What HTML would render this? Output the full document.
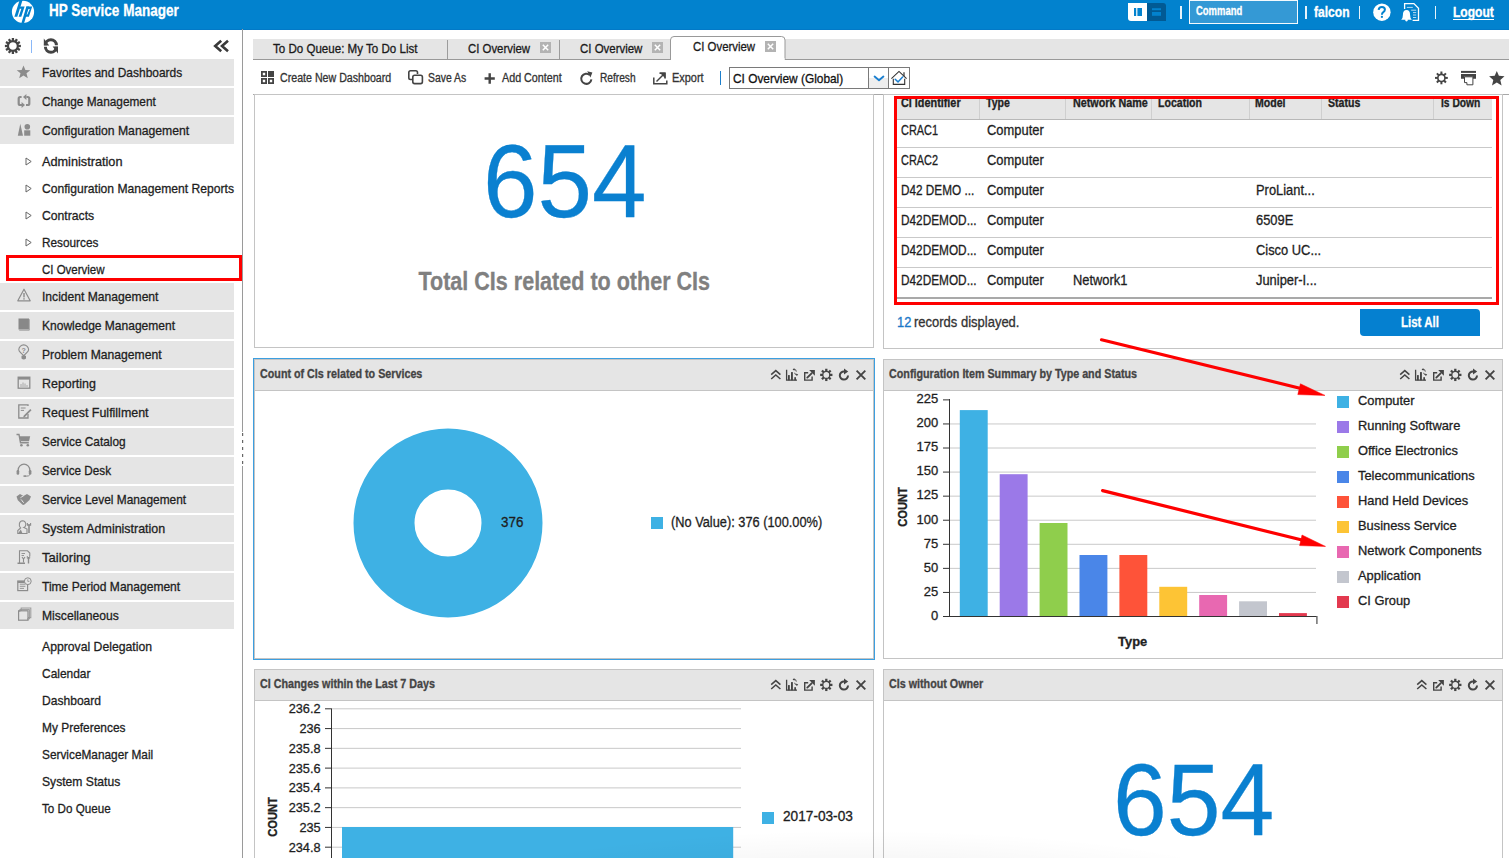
<!DOCTYPE html>
<html><head><meta charset="utf-8"><style>
html,body{margin:0;padding:0;}
body{width:1509px;height:858px;position:relative;overflow:hidden;background:#fff;font-family:"Liberation Sans",sans-serif;}
.t{position:absolute;white-space:nowrap;line-height:1;-webkit-text-stroke:0.3px currentColor;}
svg{position:absolute;overflow:visible;}
</style></head><body>
<div style="position:absolute;left:0px;top:0px;width:1509px;height:30px;background:#0282ce"></div>
<div style="position:absolute;left:0px;top:29px;width:1509px;height:1px;background:#0279c7"></div>
<svg style="left:0;top:0" width="60" height="29">
<circle cx="23" cy="11.9" r="11.1" fill="#fff"/>
<g fill="#0282ce">
<path d="M19.6 0 L22.6 0 L17.3 16.8 L14.4 16.8 Z"/>
<path d="M20.2 6.5 L24.6 6.5 L21.3 16.8 L18.6 16.8 L21.4 8.8 L19.5 8.8 Z"/>
<path d="M26.4 6.5 L29.1 6.5 L24 23.5 L21.3 23.5 Z"/>
<path fill-rule="evenodd" d="M26.4 6.5 L32.2 6.5 L28.9 16.8 L24.2 16.8 L24.9 14.6 Z M28.3 8.9 L29.8 8.9 L27.3 14.6 L25.8 14.6 Z"/>
</g></svg>
<div class="t" style="left:49.30px;top:1.90px;font-size:17px;font-weight:bold;color:#fff;transform:scaleX(0.7950);transform-origin:0 0;">HP Service Manager</div>
<svg style="left:1128px;top:3px" width="40" height="19">
<path d="M19 0 H35 Q38 0 38 3 V18 H19 Z" fill="#015a94"/>
<path d="M0 0 H19 V18 H3 Q0 18 0 15 Z" fill="#fff"/>
<rect x="6" y="5" width="2.2" height="8" fill="#0282ce"/><rect x="9.4" y="5" width="4.6" height="8" fill="#0282ce"/>
<rect x="24" y="5.2" width="9" height="2" fill="#0282ce"/><rect x="24" y="9" width="9" height="3.8" fill="#0282ce"/>
</svg>
<div style="position:absolute;left:1180.3px;top:6px;width:1.6px;height:13px;background:#fff;opacity:0.9"></div>
<div style="position:absolute;left:1305px;top:6px;width:1.6px;height:13px;background:#fff;opacity:0.9"></div>
<div style="position:absolute;left:1358.6px;top:6px;width:1.6px;height:13px;background:#fff;opacity:0.9"></div>
<div style="position:absolute;left:1434.6px;top:6px;width:1.6px;height:13px;background:#fff;opacity:0.9"></div>
<div style="position:absolute;left:1189px;top:0px;width:109px;height:24px;background:#3499d5;border:1px solid #f4f9fd;box-sizing:border-box"></div>
<div class="t" style="left:1196.20px;top:5.10px;font-size:12px;font-weight:bold;color:#fff;transform:scaleX(0.7874);transform-origin:0 0;">Command</div>
<div class="t" style="left:1314.00px;top:4.80px;font-size:14px;font-weight:bold;color:#fff;transform:scaleX(0.8616);transform-origin:0 0;">falcon</div>
<svg style="left:1365px;top:0px" width="60" height="26">
<circle cx="16.9" cy="12.2" r="8.7" fill="#fff"/>
<path d="M13.6 9.8 Q13.9 6.9 16.9 6.9 Q19.9 6.9 19.9 9.5 Q19.9 11.1 18.3 12.1 Q16.9 13 16.9 14.8" fill="none" stroke="#0282ce" stroke-width="2"/>
<rect x="15.9" y="15.9" width="2" height="1.9" fill="#0282ce"/>
<g transform="translate(35,0)">
<path d="M4.6 9 V3.6 H13.9 L18.5 8.2 V20.4 H12.6" fill="none" stroke="#fff" stroke-width="1.3"/>
<path d="M6.8 7.4 H12.8 M11.2 10.2 H16.2 M13 12.6 H16.2 M13 15 H16.2 M13 17.5 H16.2" stroke="#fff" stroke-opacity="0.8" stroke-width="0.9"/>
<path d="M1.2 19.7 Q2.9 18.7 2.9 15 Q2.9 9.9 6.5 9.9 Q10.1 9.9 10.1 15 Q10.1 18.7 11.8 19.7 Z" fill="#fff"/>
<circle cx="6.5" cy="20.1" r="1.3" fill="#fff"/>
</g>
</svg>
<div class="t" style="left:1453.00px;top:4.80px;font-size:14px;font-weight:bold;color:#fff;transform:scaleX(0.8609);transform-origin:0 0;">Logout</div>
<div style="position:absolute;left:1453px;top:18.6px;width:41px;height:1.2px;background:#fff"></div>
<svg style="left:0px;top:33px" width="26" height="26">
<g transform="translate(12.9,13)" fill="#444">
<circle r="4.95" fill="none" stroke="#444" stroke-width="2.2"/>
<rect x="-1.15" y="-8" width="2.3" height="2.8" transform="rotate(0)"/><rect x="-1.15" y="-8" width="2.3" height="2.8" transform="rotate(30)"/><rect x="-1.15" y="-8" width="2.3" height="2.8" transform="rotate(60)"/><rect x="-1.15" y="-8" width="2.3" height="2.8" transform="rotate(90)"/><rect x="-1.15" y="-8" width="2.3" height="2.8" transform="rotate(120)"/><rect x="-1.15" y="-8" width="2.3" height="2.8" transform="rotate(150)"/><rect x="-1.15" y="-8" width="2.3" height="2.8" transform="rotate(180)"/><rect x="-1.15" y="-8" width="2.3" height="2.8" transform="rotate(210)"/><rect x="-1.15" y="-8" width="2.3" height="2.8" transform="rotate(240)"/><rect x="-1.15" y="-8" width="2.3" height="2.8" transform="rotate(270)"/><rect x="-1.15" y="-8" width="2.3" height="2.8" transform="rotate(300)"/><rect x="-1.15" y="-8" width="2.3" height="2.8" transform="rotate(330)"/>
</g></svg>
<div style="position:absolute;left:31px;top:40px;width:1.2px;height:13px;background:#8ab8f8"></div>
<svg style="left:38px;top:33px" width="26" height="26">
<g fill="none" stroke="#444" stroke-width="3">
<path d="M7.4 12.2 A5.5 5.5 0 0 1 18.4 12.2"/>
<path d="M7.4 13.8 A5.5 5.5 0 0 0 18.4 13.8"/>
</g>
<path d="M5.8 5.6 L5.8 12.5 L11.2 12.5 Z" fill="#444"/>
<path d="M20 20.4 L20 13.5 L14.6 13.5 Z" fill="#444"/>
</svg>
<svg style="left:212px;top:38px" width="20" height="16">
<g fill="none" stroke="#3a3a3a" stroke-width="2.6" stroke-linejoin="miter">
<path d="M9.2 2.8 L3.2 8 L9.2 13.2"/><path d="M16 2.8 L10 8 L16 13.2"/>
</g></svg>
<div style="position:absolute;left:242px;top:29px;width:1px;height:403px;background:#9a9a9a"></div>
<svg style="left:242px;top:432px" width="2" height="36"><rect x="0" y="1" width="1.2" height="3" fill="#666"/><rect x="0" y="8" width="1.2" height="3" fill="#666"/><rect x="0" y="15" width="1.2" height="3" fill="#666"/><rect x="0" y="22" width="1.2" height="3" fill="#666"/><rect x="0" y="29" width="1.2" height="3" fill="#666"/></svg>
<div style="position:absolute;left:242px;top:466px;width:1px;height:392px;background:#9a9a9a"></div>
<div style="position:absolute;left:0px;top:59px;width:234px;height:26.6px;background:#e5e5e5"></div>
<div class="t" style="left:42.30px;top:66.00px;font-size:13px;color:#1e1e1e;transform:scaleX(0.9193);transform-origin:0 0;">Favorites and Dashboards</div>
<div style="position:absolute;left:0px;top:88px;width:234px;height:26.6px;background:#e5e5e5"></div>
<div class="t" style="left:42.30px;top:95.00px;font-size:13px;color:#1e1e1e;transform:scaleX(0.9098);transform-origin:0 0;">Change Management</div>
<div style="position:absolute;left:0px;top:117px;width:234px;height:26.6px;background:#e5e5e5"></div>
<div class="t" style="left:42.30px;top:124.00px;font-size:13px;color:#1e1e1e;transform:scaleX(0.9383);transform-origin:0 0;">Configuration Management</div>
<svg style="left:25px;top:157px" width="8" height="10"><path d="M1 1 L6.2 4.5 L1 8 Z" fill="none" stroke="#666" stroke-width="1"/></svg>
<div class="t" style="left:42.30px;top:155.00px;font-size:13px;color:#1e1e1e;transform:scaleX(0.9771);transform-origin:0 0;">Administration</div>
<svg style="left:25px;top:184px" width="8" height="10"><path d="M1 1 L6.2 4.5 L1 8 Z" fill="none" stroke="#666" stroke-width="1"/></svg>
<div class="t" style="left:42.30px;top:182.00px;font-size:13px;color:#1e1e1e;transform:scaleX(0.9320);transform-origin:0 0;">Configuration Management Reports</div>
<svg style="left:25px;top:211px" width="8" height="10"><path d="M1 1 L6.2 4.5 L1 8 Z" fill="none" stroke="#666" stroke-width="1"/></svg>
<div class="t" style="left:42.30px;top:209.00px;font-size:13px;color:#1e1e1e;transform:scaleX(0.9382);transform-origin:0 0;">Contracts</div>
<svg style="left:25px;top:238px" width="8" height="10"><path d="M1 1 L6.2 4.5 L1 8 Z" fill="none" stroke="#666" stroke-width="1"/></svg>
<div class="t" style="left:42.30px;top:236.00px;font-size:13px;color:#1e1e1e;transform:scaleX(0.9074);transform-origin:0 0;">Resources</div>
<div class="t" style="left:42.30px;top:263.00px;font-size:13px;color:#1e1e1e;transform:scaleX(0.8828);transform-origin:0 0;">CI Overview</div>
<div style="position:absolute;left:6px;top:255px;width:235.5px;height:26px;border:3px solid #fe0000;box-sizing:border-box"></div>
<div style="position:absolute;left:0px;top:283px;width:234px;height:26.6px;background:#e5e5e5"></div>
<div class="t" style="left:42.30px;top:290.00px;font-size:13px;color:#1e1e1e;transform:scaleX(0.9315);transform-origin:0 0;">Incident Management</div>
<div style="position:absolute;left:0px;top:312px;width:234px;height:26.6px;background:#e5e5e5"></div>
<div class="t" style="left:42.30px;top:319.00px;font-size:13px;color:#1e1e1e;transform:scaleX(0.9251);transform-origin:0 0;">Knowledge Management</div>
<div style="position:absolute;left:0px;top:341px;width:234px;height:26.6px;background:#e5e5e5"></div>
<div class="t" style="left:42.30px;top:348.00px;font-size:13px;color:#1e1e1e;transform:scaleX(0.9348);transform-origin:0 0;">Problem Management</div>
<div style="position:absolute;left:0px;top:370px;width:234px;height:26.6px;background:#e5e5e5"></div>
<div class="t" style="left:42.30px;top:377.00px;font-size:13px;color:#1e1e1e;transform:scaleX(0.9558);transform-origin:0 0;">Reporting</div>
<div style="position:absolute;left:0px;top:399px;width:234px;height:26.6px;background:#e5e5e5"></div>
<div class="t" style="left:42.30px;top:406.00px;font-size:13px;color:#1e1e1e;transform:scaleX(0.9578);transform-origin:0 0;">Request Fulfillment</div>
<div style="position:absolute;left:0px;top:428px;width:234px;height:26.6px;background:#e5e5e5"></div>
<div class="t" style="left:42.30px;top:435.00px;font-size:13px;color:#1e1e1e;transform:scaleX(0.9107);transform-origin:0 0;">Service Catalog</div>
<div style="position:absolute;left:0px;top:457px;width:234px;height:26.6px;background:#e5e5e5"></div>
<div class="t" style="left:42.30px;top:464.00px;font-size:13px;color:#1e1e1e;transform:scaleX(0.9009);transform-origin:0 0;">Service Desk</div>
<div style="position:absolute;left:0px;top:486px;width:234px;height:26.6px;background:#e5e5e5"></div>
<div class="t" style="left:42.30px;top:493.00px;font-size:13px;color:#1e1e1e;transform:scaleX(0.9151);transform-origin:0 0;">Service Level Management</div>
<div style="position:absolute;left:0px;top:515px;width:234px;height:26.6px;background:#e5e5e5"></div>
<div class="t" style="left:42.30px;top:522.00px;font-size:13px;color:#1e1e1e;transform:scaleX(0.9578);transform-origin:0 0;">System Administration</div>
<div style="position:absolute;left:0px;top:544px;width:234px;height:26.6px;background:#e5e5e5"></div>
<div class="t" style="left:42.30px;top:551.00px;font-size:13px;color:#1e1e1e;transform:scaleX(1.0034);transform-origin:0 0;">Tailoring</div>
<div style="position:absolute;left:0px;top:573px;width:234px;height:26.6px;background:#e5e5e5"></div>
<div class="t" style="left:42.30px;top:580.00px;font-size:13px;color:#1e1e1e;transform:scaleX(0.9267);transform-origin:0 0;">Time Period Management</div>
<div style="position:absolute;left:0px;top:602px;width:234px;height:26.6px;background:#e5e5e5"></div>
<div class="t" style="left:42.30px;top:609.00px;font-size:13px;color:#1e1e1e;transform:scaleX(0.9332);transform-origin:0 0;">Miscellaneous</div>
<div class="t" style="left:42.30px;top:640.00px;font-size:13px;color:#1e1e1e;transform:scaleX(0.9400);transform-origin:0 0;">Approval Delegation</div>
<div class="t" style="left:42.30px;top:667.00px;font-size:13px;color:#1e1e1e;transform:scaleX(0.9189);transform-origin:0 0;">Calendar</div>
<div class="t" style="left:42.30px;top:694.00px;font-size:13px;color:#1e1e1e;transform:scaleX(0.9289);transform-origin:0 0;">Dashboard</div>
<div class="t" style="left:42.30px;top:721.00px;font-size:13px;color:#1e1e1e;transform:scaleX(0.9171);transform-origin:0 0;">My Preferences</div>
<div class="t" style="left:42.30px;top:748.00px;font-size:13px;color:#1e1e1e;transform:scaleX(0.9104);transform-origin:0 0;">ServiceManager Mail</div>
<div class="t" style="left:42.30px;top:775.00px;font-size:13px;color:#1e1e1e;transform:scaleX(0.9330);transform-origin:0 0;">System Status</div>
<div class="t" style="left:42.30px;top:802.00px;font-size:13px;color:#1e1e1e;transform:scaleX(0.8966);transform-origin:0 0;">To Do Queue</div>
<svg style="left:16px;top:65px" width="16" height="15"><path d="M7.5 0.5 L9.4 5 L14.3 5.2 L10.5 8.3 L11.8 13.3 L7.5 10.5 L3.2 13.3 L4.5 8.3 L0.7 5.2 L5.6 5 Z" fill="#8c8c8c"/></svg>
<svg style="left:0;top:0" width="40" height="140"><path d="M21.6 97 H20.2 Q18.7 97 18.7 98.5 V103.5 Q18.7 105 20.2 105 H22" fill="none" stroke="#8c8c8c" stroke-width="2.2"/><path d="M26 105 H27.8 Q29.3 105 29.3 103.5 V98.5 Q29.3 97 27.8 97 H26.4" fill="none" stroke="#8c8c8c" stroke-width="2.2"/><path d="M21.6 102 L25 105 L21.6 108 Z M26.4 94 L23 97 L26.4 100 Z" fill="#8c8c8c"/></svg>
<svg style="left:16px;top:123px" width="16" height="15"><path d="M4.3 0.8 L7 12.7 H1.8 Z" fill="#8c8c8c"/><circle cx="11.3" cy="3.7" r="2.8" fill="#8c8c8c"/><rect x="8.2" y="7.3" width="6.1" height="5.4" fill="#8c8c8c"/></svg>
<svg style="left:17px;top:288px" width="15" height="15"><path d="M7 1.2 L13.2 12.8 H0.8 Z" fill="none" stroke="#8c8c8c" stroke-width="1.2" stroke-linejoin="round"/><rect x="6.3" y="5" width="1.4" height="4.4" fill="#8c8c8c"/><rect x="6.3" y="10.2" width="1.4" height="1.4" fill="#8c8c8c"/></svg>
<svg style="left:18px;top:318px" width="13" height="14"><rect x="0.5" y="0.5" width="10.5" height="11" fill="#888"/><path d="M11.3 1.2 V12.2 H1.2" fill="none" stroke="#a0a0a0" stroke-width="1"/></svg>
<svg style="left:18px;top:345px" width="13" height="18"><path d="M5.6 12.2 Q5.6 9.8 3 8 Q0.8 6.2 0.8 4.8 A4.9 4.9 0 0 1 10.6 4.8 Q10.6 6.2 8.4 8 Q5.8 9.8 5.8 12.2" fill="none" stroke="#8c8c8c" stroke-width="1.1"/><path d="M3.5 10.8 H8 V13.6 Q5.7 15.6 3.5 13.6 Z" fill="#8c8c8c"/><text x="5.7" y="8" text-anchor="middle" font-family="Liberation Sans" font-weight="bold" font-size="7" fill="#8c8c8c">?</text></svg>
<svg style="left:17px;top:376px" width="14" height="14"><rect x="1.2" y="1.2" width="11.6" height="11" fill="none" stroke="#8c8c8c" stroke-width="1.3"/><rect x="1.2" y="1" width="11.6" height="2.6" fill="#8c8c8c"/><path d="M4 11 V8 M6 11 V6.5 M8 11 V7.5 M10 11 V9" stroke="#a8a8a8" stroke-width="1"/></svg>
<svg style="left:18px;top:404px" width="14" height="16"><path d="M10 2 V0.8 H0.8 V14 H10 V10" fill="none" stroke="#8c8c8c" stroke-width="1.3"/><path d="M2.8 4 H7.6 M2.8 6.4 H6" stroke="#8c8c8c" stroke-width="1"/><path d="M5.6 11.8 L12.3 5 L13.5 6.2 L6.8 13 L5.2 13.4 Z" fill="#8c8c8c"/></svg>
<svg style="left:16px;top:433px" width="16" height="16"><path d="M0.5 1.5 H3 L4.5 9.8 H12.8" fill="none" stroke="#8c8c8c" stroke-width="1.4"/><path d="M3.6 3.2 H14.2 L13 8.3 H4.4 Z" fill="#8c8c8c"/><circle cx="5.4" cy="12.2" r="1.3" fill="#8c8c8c"/><circle cx="11.8" cy="12.2" r="1.3" fill="#8c8c8c"/></svg>
<svg style="left:16px;top:463px" width="16" height="15"><path d="M2.2 9 V7 A5.8 5.8 0 0 1 13.8 7 V9" fill="none" stroke="#8c8c8c" stroke-width="1.3"/><rect x="0.6" y="7" width="2.6" height="4.8" rx="1.2" fill="#8c8c8c"/><rect x="12.8" y="7" width="2.6" height="4.8" rx="1.2" fill="#8c8c8c"/><path d="M14 11.5 Q13 13.5 9.5 13.2" fill="none" stroke="#8c8c8c" stroke-width="1"/><rect x="7.5" y="12.3" width="2.5" height="1.6" fill="#8c8c8c"/></svg>
<svg style="left:16px;top:493px" width="16" height="13"><path d="M0.5 3.5 L4 1 L7.5 3 L11 1 L15 3.5 L13.5 7 L8.5 11.5 Q7 12.5 6 11.3 L1.8 7.3 Z" fill="#8c8c8c"/><path d="M4.5 4.5 L7.5 3 M6 8 L8 9.8 M4.6 6.3 L7 8.5" stroke="#e5e5e5" stroke-width="0.9"/></svg>
<svg style="left:17px;top:520px" width="15" height="15"><path d="M5.5 0.8 A3.4 3.4 0 0 1 8.8 4.5 Q8.6 7 6.8 7.5 L10 9 V13.5 H0.8 V10.5 L3.6 8 Q1.8 6.5 2.4 3.6 A3.4 3.4 0 0 1 5.5 0.8Z" fill="none" stroke="#8c8c8c" stroke-width="1.1"/><path d="M1 13.5 L3.8 9.5 L5.5 13.5 Z" fill="#8c8c8c"/><path d="M12 4 V13" stroke="#8c8c8c" stroke-width="1.6"/><path d="M10.4 3 V5.2 H13.6 V3" fill="none" stroke="#8c8c8c" stroke-width="1.1"/></svg>
<svg style="left:17px;top:550px" width="15" height="15"><path d="M2.5 13.3 V0.8 H10.5 L12.8 3 V6" fill="none" stroke="#8c8c8c" stroke-width="1.1"/><path d="M4.5 3.5 H8 M4.5 5.5 H7" stroke="#8c8c8c" stroke-width="0.9"/><path d="M0.5 12.5 H8 V14 H0.5Z" fill="#8c8c8c"/><path d="M5 7 L6.5 9 L8 7 M6.5 9 V12.5" fill="none" stroke="#8c8c8c" stroke-width="1.1"/><path d="M11.5 7 V13.5" stroke="#8c8c8c" stroke-width="1.4"/><path d="M10.3 6 V8.3 H12.7 V6" fill="none" stroke="#8c8c8c" stroke-width="0.9"/></svg>
<svg style="left:17px;top:577px" width="15" height="15"><rect x="0.8" y="4" width="9.8" height="9.6" fill="none" stroke="#8c8c8c" stroke-width="1.2"/><path d="M2.8 7.2 H8.4 M2.8 9.3 H8.4 M2.8 11.4 H7" stroke="#8c8c8c" stroke-width="0.9"/><rect x="0.8" y="4" width="9.8" height="2" fill="#8c8c8c"/><circle cx="10.8" cy="4.2" r="3.4" fill="#e5e5e5" stroke="#8c8c8c" stroke-width="1"/><path d="M10.8 2.3 V4.4 H12.4" fill="none" stroke="#8c8c8c" stroke-width="0.8"/></svg>
<svg style="left:18px;top:607px" width="14" height="15"><path d="M3.2 3.8 V1 H12.8 V10.6 H10" fill="none" stroke="#a0a0a0" stroke-width="1.1"/><path d="M1.8 5 V2.4 H11.4 V12 H9" fill="none" stroke="#999" stroke-width="1"/><rect x="0.6" y="3.8" width="9.4" height="9.4" fill="none" stroke="#8c8c8c" stroke-width="1.2"/></svg>
<div style="position:absolute;left:253px;top:39px;width:1256px;height:20px;background:#e5e5e5;border-bottom:1px solid #999;box-sizing:content-box"></div>
<div style="position:absolute;left:447px;top:40px;width:1px;height:19px;background:#9c9c9c"></div>
<div style="position:absolute;left:559px;top:40px;width:1px;height:19px;background:#9c9c9c"></div>
<div class="t" style="left:273.20px;top:41.90px;font-size:13px;color:#1a1a1a;transform:scaleX(0.8900);transform-origin:0 0;">To Do Queue: My To Do List</div>
<div class="t" style="left:468.00px;top:41.90px;font-size:13px;color:#1a1a1a;transform:scaleX(0.8757);transform-origin:0 0;">CI Overview</div>
<svg style="left:540px;top:42px" width="12" height="12"><rect x="0" y="0" width="11" height="11" fill="#b3b3b3"/><path d="M2.8 2.8 L8.2 8.2 M8.2 2.8 L2.8 8.2" stroke="#fff" stroke-width="1.5"/></svg>
<div class="t" style="left:580.00px;top:41.90px;font-size:13px;color:#1a1a1a;transform:scaleX(0.8814);transform-origin:0 0;">CI Overview</div>
<svg style="left:652px;top:42px" width="12" height="12"><rect x="0" y="0" width="11" height="11" fill="#b3b3b3"/><path d="M2.8 2.8 L8.2 8.2 M8.2 2.8 L2.8 8.2" stroke="#fff" stroke-width="1.5"/></svg>
<svg style="left:670px;top:36px" width="117" height="25"><path d="M0.5 24 V4 Q0.5 0.5 4 0.5 H111.5 Q115 0.5 115 4 V24" fill="#fff" stroke="#999" stroke-width="1"/><rect x="1" y="22" width="113.5" height="3" fill="#fff"/></svg>
<div class="t" style="left:692.50px;top:40.00px;font-size:13px;color:#1a1a1a;transform:scaleX(0.8772);transform-origin:0 0;">CI Overview</div>
<svg style="left:765px;top:41px" width="12" height="12"><rect x="0" y="0" width="11" height="11" fill="#b3b3b3"/><path d="M2.8 2.8 L8.2 8.2 M8.2 2.8 L2.8 8.2" stroke="#fff" stroke-width="1.5"/></svg>
<svg style="left:261px;top:71px" width="14" height="14" fill="#444">
<path fill-rule="evenodd" d="M0 0H6V6H0Z M1.8 1.8V4.2H4.2V1.8Z"/>
<rect x="7" y="0" width="6" height="6"/>
<path fill-rule="evenodd" d="M0 7H6V13H0Z M1.8 8.8V11.2H4.2V8.8Z"/>
<path fill-rule="evenodd" d="M7 7H13V13H7Z M8.8 8.8V11.2H11.2V8.8Z"/>
</svg>
<div class="t" style="left:279.80px;top:71.90px;font-size:12px;color:#333;transform:scaleX(0.8868);transform-origin:0 0;">Create New Dashboard</div>
<svg style="left:408px;top:70px" width="16" height="16" fill="none" stroke="#444" stroke-width="1.6">
<path d="M4 9.5 H2.5 Q0.8 9.5 0.8 7.8 V2.6 Q0.8 0.8 2.6 0.8 H7.8 Q9.5 0.8 9.5 2.6 V4"/>
<rect x="4.8" y="5.2" width="9.6" height="8.4" rx="1.8"/>
</svg>
<div class="t" style="left:427.80px;top:71.90px;font-size:12px;color:#333;transform:scaleX(0.8656);transform-origin:0 0;">Save As</div>
<svg style="left:484px;top:73px" width="13" height="12"><path d="M5.7 0.3V10.7 M0.6 5.5H10.8" stroke="#444" stroke-width="2.4"/></svg>
<div class="t" style="left:502.30px;top:71.90px;font-size:12px;color:#333;transform:scaleX(0.8952);transform-origin:0 0;">Add Content</div>
<svg style="left:580px;top:71px" width="14" height="15">
<path d="M9.8 4 A5.1 5.1 0 1 0 11.4 8.4" fill="none" stroke="#444" stroke-width="2"/>
<path d="M7.2 0.2 L12.4 1.6 L10.4 6.4 Z" fill="#444"/>
</svg>
<div class="t" style="left:599.60px;top:71.90px;font-size:12px;color:#333;transform:scaleX(0.8473);transform-origin:0 0;">Refresh</div>
<svg style="left:653px;top:72px" width="15" height="13" fill="none" stroke="#444" stroke-width="1.5">
<path d="M0.8 5.5 V11.8 H13.8 V8.5"/>
<path d="M3.5 9.5 L11 2"/>
<path d="M6.5 1.2 H12 V6.5" />
</svg>
<svg style="left:653px;top:72px" width="15" height="13"><path d="M6.5 0.5 H12.5 V6.5 Z" fill="#444"/></svg>
<div class="t" style="left:672.00px;top:71.90px;font-size:12px;color:#333;transform:scaleX(0.9114);transform-origin:0 0;">Export</div>
<div style="position:absolute;left:719.5px;top:71px;width:1.3px;height:14px;background:#1d7fcc"></div>
<div style="position:absolute;left:729px;top:67px;width:181px;height:22px;border:1px solid #7a7a7a;box-sizing:border-box;background:#fff"></div>
<div style="position:absolute;left:868px;top:67px;width:21px;height:22px;background:linear-gradient(#fff 0,#fff 50%,#eeeeee 50%,#eeeeee 100%);border:1px solid #7a7a7a;box-sizing:border-box"></div>
<div class="t" style="left:732.80px;top:72.00px;font-size:13px;color:#111;transform:scaleX(0.9133);transform-origin:0 0;">CI Overview (Global)</div>
<svg style="left:860px;top:64px" width="55" height="28"><path d="M14.6 12.6 L19 16.2 L23.4 12.6" fill="none" stroke="#1a7fd0" stroke-width="1.9" stroke-linecap="round" stroke-linejoin="round"/><path d="M33.3 14.8 V20.4 H44.7 V14.8" fill="none" stroke="#333" stroke-width="1.1"/><path d="M31.4 14.6 L39 7.4 L46.6 14.6" fill="none" stroke="#333" stroke-width="1.1"/><path d="M44 8.2 V12.6" stroke="#333" stroke-width="1.2"/><path d="M35.2 15.3 L38 17.9 L42.6 13" fill="none" stroke="#1a7fd0" stroke-width="1.5" stroke-linecap="round"/></svg>
<svg style="left:1434px;top:71px" width="15" height="15">
<g transform="translate(7.4,6.9)" fill="#444">
<circle r="3.55" fill="none" stroke="#444" stroke-width="1.6"/>
<rect x="-1" y="-6.4" width="2" height="3" transform="rotate(0)"/><rect x="-1" y="-6.4" width="2" height="3" transform="rotate(45)"/><rect x="-1" y="-6.4" width="2" height="3" transform="rotate(90)"/><rect x="-1" y="-6.4" width="2" height="3" transform="rotate(135)"/><rect x="-1" y="-6.4" width="2" height="3" transform="rotate(180)"/><rect x="-1" y="-6.4" width="2" height="3" transform="rotate(225)"/><rect x="-1" y="-6.4" width="2" height="3" transform="rotate(270)"/><rect x="-1" y="-6.4" width="2" height="3" transform="rotate(315)"/>
</g></svg>
<svg style="left:1460px;top:70px" width="18" height="17">
<rect x="1" y="0.9" width="15" height="2" fill="#444"/>
<path d="M1 4 H16 V8.7 H13 V6.8 H4 V8.7 H1 Z" fill="#444"/>
<path d="M4.5 6.8 H12.9 V14.8 H6.9 V12.6 H4.5 Z" fill="#fff" stroke="#444" stroke-width="1"/>
</svg>
<svg style="left:1488px;top:69.5px" width="18" height="18"><path d="M8.8 0.9 L10.9 5.8 L16.5 6.3 L12.3 10 L13.6 15.4 L8.8 12.5 L4 15.4 L5.3 10 L1.1 6.3 L6.7 5.8 Z" fill="#444"/></svg>
<div style="position:absolute;left:253px;top:94px;width:1256px;height:1px;background:#a8a8a8"></div>
<div style="position:absolute;left:254px;top:94px;width:620px;height:254px;border:1px solid #c4c4c4;box-sizing:border-box;background:#fff"></div>
<div class="t" style="left:477.93px;top:129.40px;font-size:104px;color:#0a80d0;transform:scaleX(0.9422);transform-origin:50% 0;">654</div>
<div class="t" style="left:394.73px;top:268.50px;font-size:25px;font-weight:bold;color:#808080;transform:scaleX(0.8614);transform-origin:50% 0;">Total CIs related to other CIs</div>
<div style="position:absolute;left:883px;top:94px;width:620px;height:255px;border:1px solid #c4c4c4;box-sizing:border-box;background:#fff"></div>
<div style="position:absolute;left:897px;top:99px;width:595px;height:20px;background:#e5e5e5;border-bottom:1px solid #b8b8b8;box-sizing:content-box"></div>
<div style="position:absolute;left:979px;top:99px;width:1px;height:20px;background:#cfcfcf"></div>
<div style="position:absolute;left:1065px;top:99px;width:1px;height:20px;background:#cfcfcf"></div>
<div style="position:absolute;left:1151px;top:99px;width:1px;height:20px;background:#cfcfcf"></div>
<div style="position:absolute;left:1249px;top:99px;width:1px;height:20px;background:#cfcfcf"></div>
<div style="position:absolute;left:1321px;top:99px;width:1px;height:20px;background:#cfcfcf"></div>
<div style="position:absolute;left:1433px;top:99px;width:1px;height:20px;background:#cfcfcf"></div>
<div class="t" style="left:900.60px;top:97.20px;font-size:12px;font-weight:bold;color:#222;transform:scaleX(0.9032);transform-origin:0 0;">CI Identifier</div>
<div class="t" style="left:986.40px;top:97.20px;font-size:12px;font-weight:bold;color:#222;transform:scaleX(0.8800);transform-origin:0 0;">Type</div>
<div class="t" style="left:1072.50px;top:97.20px;font-size:12px;font-weight:bold;color:#222;transform:scaleX(0.8961);transform-origin:0 0;">Network Name</div>
<div class="t" style="left:1158.40px;top:97.20px;font-size:12px;font-weight:bold;color:#222;transform:scaleX(0.8800);transform-origin:0 0;">Location</div>
<div class="t" style="left:1255.20px;top:97.20px;font-size:12px;font-weight:bold;color:#222;transform:scaleX(0.8800);transform-origin:0 0;">Model</div>
<div class="t" style="left:1328.20px;top:97.20px;font-size:12px;font-weight:bold;color:#222;transform:scaleX(0.8800);transform-origin:0 0;">Status</div>
<div class="t" style="left:1440.50px;top:97.20px;font-size:12px;font-weight:bold;color:#222;transform:scaleX(0.8546);transform-origin:0 0;">Is Down</div>
<div style="position:absolute;left:897px;top:147px;width:595px;height:1px;background:#c9c9c9"></div>
<div style="position:absolute;left:897px;top:177px;width:595px;height:1px;background:#c9c9c9"></div>
<div style="position:absolute;left:897px;top:207px;width:595px;height:1px;background:#c9c9c9"></div>
<div style="position:absolute;left:897px;top:237px;width:595px;height:1px;background:#c9c9c9"></div>
<div style="position:absolute;left:897px;top:267px;width:595px;height:1px;background:#c9c9c9"></div>
<div style="position:absolute;left:897px;top:297px;width:595px;height:1.5px;background:#a9a9a9"></div>
<div class="t" style="left:901.20px;top:123.20px;font-size:14px;color:#1e1e1e;transform:scaleX(0.7797);transform-origin:0 0;">CRAC1</div>
<div class="t" style="left:987.00px;top:123.20px;font-size:14px;color:#1e1e1e;transform:scaleX(0.9229);transform-origin:0 0;">Computer</div>
<div class="t" style="left:901.20px;top:153.20px;font-size:14px;color:#1e1e1e;transform:scaleX(0.7797);transform-origin:0 0;">CRAC2</div>
<div class="t" style="left:987.00px;top:153.20px;font-size:14px;color:#1e1e1e;transform:scaleX(0.9229);transform-origin:0 0;">Computer</div>
<div class="t" style="left:901.20px;top:183.20px;font-size:14px;color:#1e1e1e;transform:scaleX(0.8402);transform-origin:0 0;">D42 DEMO ...</div>
<div class="t" style="left:987.00px;top:183.20px;font-size:14px;color:#1e1e1e;transform:scaleX(0.9229);transform-origin:0 0;">Computer</div>
<div class="t" style="left:1256.30px;top:183.20px;font-size:14px;color:#1e1e1e;transform:scaleX(0.9200);transform-origin:0 0;">ProLiant...</div>
<div class="t" style="left:901.20px;top:213.20px;font-size:14px;color:#1e1e1e;transform:scaleX(0.8440);transform-origin:0 0;">D42DEMOD...</div>
<div class="t" style="left:987.00px;top:213.20px;font-size:14px;color:#1e1e1e;transform:scaleX(0.9229);transform-origin:0 0;">Computer</div>
<div class="t" style="left:1256.30px;top:213.20px;font-size:14px;color:#1e1e1e;transform:scaleX(0.9200);transform-origin:0 0;">6509E</div>
<div class="t" style="left:901.20px;top:243.20px;font-size:14px;color:#1e1e1e;transform:scaleX(0.8440);transform-origin:0 0;">D42DEMOD...</div>
<div class="t" style="left:987.00px;top:243.20px;font-size:14px;color:#1e1e1e;transform:scaleX(0.9229);transform-origin:0 0;">Computer</div>
<div class="t" style="left:1256.30px;top:243.20px;font-size:14px;color:#1e1e1e;transform:scaleX(0.9200);transform-origin:0 0;">Cisco UC...</div>
<div class="t" style="left:901.20px;top:273.20px;font-size:14px;color:#1e1e1e;transform:scaleX(0.8440);transform-origin:0 0;">D42DEMOD...</div>
<div class="t" style="left:987.00px;top:273.20px;font-size:14px;color:#1e1e1e;transform:scaleX(0.9229);transform-origin:0 0;">Computer</div>
<div class="t" style="left:1073.00px;top:273.20px;font-size:14px;color:#1e1e1e;transform:scaleX(0.9200);transform-origin:0 0;">Network1</div>
<div class="t" style="left:1256.30px;top:273.20px;font-size:14px;color:#1e1e1e;transform:scaleX(0.9200);transform-origin:0 0;">Juniper-I...</div>
<div style="position:absolute;left:894px;top:96px;width:605px;height:209px;border:3px solid #fe0000;box-sizing:border-box"></div>
<div class="t" style="left:896.70px;top:315.00px;font-size:14px;color:#1a78c8;transform:scaleX(0.9200);transform-origin:0 0;">12</div>
<div class="t" style="left:913.50px;top:315.00px;font-size:14px;color:#333;transform:scaleX(0.9281);transform-origin:0 0;">records displayed.</div>
<div style="position:absolute;left:1360px;top:309px;width:120px;height:27px;background:#0580d0;border-radius:0 4px 0 4px"></div>
<div class="t" style="left:1401.30px;top:315.00px;font-size:14px;font-weight:bold;color:#fff;transform:scaleX(0.8214);transform-origin:0 0;">List All</div>
<div style="position:absolute;left:253px;top:358px;width:622px;height:302px;border:1px solid #3c9fe0;box-sizing:border-box"></div>
<div style="position:absolute;left:254px;top:359px;width:620px;height:300px;border:1px solid #c4c4c4;box-sizing:border-box;background:#fff"></div>
<div style="position:absolute;left:255px;top:360px;width:618px;height:30px;background:#e5e5e5;border-bottom:1px solid #c4c4c4;box-sizing:content-box"></div>
<div class="t" style="left:260.00px;top:367.60px;font-size:12px;font-weight:bold;color:#444;transform:scaleX(0.8950);transform-origin:0 0;">Count of CIs related to Services</div>
<div style="position:absolute;left:883px;top:359px;width:620px;height:300px;border:1px solid #c4c4c4;box-sizing:border-box;background:#fff"></div>
<div style="position:absolute;left:884px;top:360px;width:618px;height:30px;background:#e5e5e5;border-bottom:1px solid #c4c4c4;box-sizing:content-box"></div>
<div class="t" style="left:889.00px;top:367.60px;font-size:12px;font-weight:bold;color:#444;transform:scaleX(0.8950);transform-origin:0 0;">Configuration Item Summary by Type and Status</div>
<div style="position:absolute;left:254px;top:669px;width:620px;height:200px;border:1px solid #c4c4c4;box-sizing:border-box;background:#fff"></div>
<div style="position:absolute;left:255px;top:670px;width:618px;height:30px;background:#e5e5e5;border-bottom:1px solid #c4c4c4;box-sizing:content-box"></div>
<div class="t" style="left:260.00px;top:677.60px;font-size:12px;font-weight:bold;color:#444;transform:scaleX(0.8950);transform-origin:0 0;">CI Changes within the Last 7 Days</div>
<div style="position:absolute;left:883px;top:669px;width:620px;height:200px;border:1px solid #c4c4c4;box-sizing:border-box;background:#fff"></div>
<div style="position:absolute;left:884px;top:670px;width:618px;height:30px;background:#e5e5e5;border-bottom:1px solid #c4c4c4;box-sizing:content-box"></div>
<div class="t" style="left:889.00px;top:677.60px;font-size:12px;font-weight:bold;color:#444;transform:scaleX(0.8950);transform-origin:0 0;">CIs without Owner</div>
<svg style="left:768px;top:364px" width="106" height="22"><path d="M3.2 10.6 L7.8 6.6 L12.4 10.6 M3.2 15 L7.8 11 L12.4 15" fill="none" stroke="#444" stroke-width="1.5"/><path d="M18.6 5.8 V16.2 H29" fill="none" stroke="#444" stroke-width="1.3"/><rect x="20" y="11.1" width="1.8" height="5.2" fill="#444"/><rect x="23" y="8.1" width="1.9" height="8.2" fill="#444"/><rect x="26.3" y="13.2" width="1.7" height="3.1" fill="#444"/><path d="M25.6 5.4 Q28.4 5 28.3 7.6 M26.6 8.8 Q26.8 11 29.4 10.8" fill="none" stroke="#444" stroke-width="0.9"/><path d="M24.6 5.4 L26.4 4.1 L26.4 6.7 Z M30.2 10.8 L28.4 9.5 L28.4 12.1 Z" fill="#444"/><path d="M40.2 8.8 H36.7 V16.1 H44.1 V12.6" fill="none" stroke="#444" stroke-width="1.4"/><path d="M39.3 13.6 L43.6 9.3" stroke="#444" stroke-width="1.9" stroke-linecap="round"/><path d="M41.2 6 L46.9 6 L46.9 11.7 Z" fill="#444"/><g transform="translate(58.3,10.9)"><circle r="3.5" fill="none" stroke="#444" stroke-width="1.3"/><rect x="-1.15" y="-6.15" width="2.3" height="2.8" transform="rotate(0)" fill="#444"/><rect x="-1.15" y="-6.15" width="2.3" height="2.8" transform="rotate(45)" fill="#444"/><rect x="-1.15" y="-6.15" width="2.3" height="2.8" transform="rotate(90)" fill="#444"/><rect x="-1.15" y="-6.15" width="2.3" height="2.8" transform="rotate(135)" fill="#444"/><rect x="-1.15" y="-6.15" width="2.3" height="2.8" transform="rotate(180)" fill="#444"/><rect x="-1.15" y="-6.15" width="2.3" height="2.8" transform="rotate(225)" fill="#444"/><rect x="-1.15" y="-6.15" width="2.3" height="2.8" transform="rotate(270)" fill="#444"/><rect x="-1.15" y="-6.15" width="2.3" height="2.8" transform="rotate(315)" fill="#444"/></g><path d="M80 11.5 A4.1 4.1 0 1 1 76.2 7.4" fill="none" stroke="#444" stroke-width="2"/><path d="M76 4.6 L80.2 7.5 L76 10.4 Z" fill="#444"/><path d="M88.6 6.7 L97.3 15.4 M97.3 6.7 L88.6 15.4" stroke="#444" stroke-width="1.9"/></svg>
<svg style="left:1397px;top:364px" width="106" height="22"><path d="M3.2 10.6 L7.8 6.6 L12.4 10.6 M3.2 15 L7.8 11 L12.4 15" fill="none" stroke="#444" stroke-width="1.5"/><path d="M18.6 5.8 V16.2 H29" fill="none" stroke="#444" stroke-width="1.3"/><rect x="20" y="11.1" width="1.8" height="5.2" fill="#444"/><rect x="23" y="8.1" width="1.9" height="8.2" fill="#444"/><rect x="26.3" y="13.2" width="1.7" height="3.1" fill="#444"/><path d="M25.6 5.4 Q28.4 5 28.3 7.6 M26.6 8.8 Q26.8 11 29.4 10.8" fill="none" stroke="#444" stroke-width="0.9"/><path d="M24.6 5.4 L26.4 4.1 L26.4 6.7 Z M30.2 10.8 L28.4 9.5 L28.4 12.1 Z" fill="#444"/><path d="M40.2 8.8 H36.7 V16.1 H44.1 V12.6" fill="none" stroke="#444" stroke-width="1.4"/><path d="M39.3 13.6 L43.6 9.3" stroke="#444" stroke-width="1.9" stroke-linecap="round"/><path d="M41.2 6 L46.9 6 L46.9 11.7 Z" fill="#444"/><g transform="translate(58.3,10.9)"><circle r="3.5" fill="none" stroke="#444" stroke-width="1.3"/><rect x="-1.15" y="-6.15" width="2.3" height="2.8" transform="rotate(0)" fill="#444"/><rect x="-1.15" y="-6.15" width="2.3" height="2.8" transform="rotate(45)" fill="#444"/><rect x="-1.15" y="-6.15" width="2.3" height="2.8" transform="rotate(90)" fill="#444"/><rect x="-1.15" y="-6.15" width="2.3" height="2.8" transform="rotate(135)" fill="#444"/><rect x="-1.15" y="-6.15" width="2.3" height="2.8" transform="rotate(180)" fill="#444"/><rect x="-1.15" y="-6.15" width="2.3" height="2.8" transform="rotate(225)" fill="#444"/><rect x="-1.15" y="-6.15" width="2.3" height="2.8" transform="rotate(270)" fill="#444"/><rect x="-1.15" y="-6.15" width="2.3" height="2.8" transform="rotate(315)" fill="#444"/></g><path d="M80 11.5 A4.1 4.1 0 1 1 76.2 7.4" fill="none" stroke="#444" stroke-width="2"/><path d="M76 4.6 L80.2 7.5 L76 10.4 Z" fill="#444"/><path d="M88.6 6.7 L97.3 15.4 M97.3 6.7 L88.6 15.4" stroke="#444" stroke-width="1.9"/></svg>
<svg style="left:768px;top:674px" width="106" height="22"><path d="M3.2 10.6 L7.8 6.6 L12.4 10.6 M3.2 15 L7.8 11 L12.4 15" fill="none" stroke="#444" stroke-width="1.5"/><path d="M18.6 5.8 V16.2 H29" fill="none" stroke="#444" stroke-width="1.3"/><rect x="20" y="11.1" width="1.8" height="5.2" fill="#444"/><rect x="23" y="8.1" width="1.9" height="8.2" fill="#444"/><rect x="26.3" y="13.2" width="1.7" height="3.1" fill="#444"/><path d="M25.6 5.4 Q28.4 5 28.3 7.6 M26.6 8.8 Q26.8 11 29.4 10.8" fill="none" stroke="#444" stroke-width="0.9"/><path d="M24.6 5.4 L26.4 4.1 L26.4 6.7 Z M30.2 10.8 L28.4 9.5 L28.4 12.1 Z" fill="#444"/><path d="M40.2 8.8 H36.7 V16.1 H44.1 V12.6" fill="none" stroke="#444" stroke-width="1.4"/><path d="M39.3 13.6 L43.6 9.3" stroke="#444" stroke-width="1.9" stroke-linecap="round"/><path d="M41.2 6 L46.9 6 L46.9 11.7 Z" fill="#444"/><g transform="translate(58.3,10.9)"><circle r="3.5" fill="none" stroke="#444" stroke-width="1.3"/><rect x="-1.15" y="-6.15" width="2.3" height="2.8" transform="rotate(0)" fill="#444"/><rect x="-1.15" y="-6.15" width="2.3" height="2.8" transform="rotate(45)" fill="#444"/><rect x="-1.15" y="-6.15" width="2.3" height="2.8" transform="rotate(90)" fill="#444"/><rect x="-1.15" y="-6.15" width="2.3" height="2.8" transform="rotate(135)" fill="#444"/><rect x="-1.15" y="-6.15" width="2.3" height="2.8" transform="rotate(180)" fill="#444"/><rect x="-1.15" y="-6.15" width="2.3" height="2.8" transform="rotate(225)" fill="#444"/><rect x="-1.15" y="-6.15" width="2.3" height="2.8" transform="rotate(270)" fill="#444"/><rect x="-1.15" y="-6.15" width="2.3" height="2.8" transform="rotate(315)" fill="#444"/></g><path d="M80 11.5 A4.1 4.1 0 1 1 76.2 7.4" fill="none" stroke="#444" stroke-width="2"/><path d="M76 4.6 L80.2 7.5 L76 10.4 Z" fill="#444"/><path d="M88.6 6.7 L97.3 15.4 M97.3 6.7 L88.6 15.4" stroke="#444" stroke-width="1.9"/></svg>
<svg style="left:1397px;top:674px" width="106" height="22"><path d="M20.2 10.6 L24.8 6.6 L29.4 10.6 M20.2 15 L24.8 11 L29.4 15" fill="none" stroke="#444" stroke-width="1.5"/><path d="M40.2 8.8 H36.7 V16.1 H44.1 V12.6" fill="none" stroke="#444" stroke-width="1.4"/><path d="M39.3 13.6 L43.6 9.3" stroke="#444" stroke-width="1.9" stroke-linecap="round"/><path d="M41.2 6 L46.9 6 L46.9 11.7 Z" fill="#444"/><g transform="translate(58.3,10.9)"><circle r="3.5" fill="none" stroke="#444" stroke-width="1.3"/><rect x="-1.15" y="-6.15" width="2.3" height="2.8" transform="rotate(0)" fill="#444"/><rect x="-1.15" y="-6.15" width="2.3" height="2.8" transform="rotate(45)" fill="#444"/><rect x="-1.15" y="-6.15" width="2.3" height="2.8" transform="rotate(90)" fill="#444"/><rect x="-1.15" y="-6.15" width="2.3" height="2.8" transform="rotate(135)" fill="#444"/><rect x="-1.15" y="-6.15" width="2.3" height="2.8" transform="rotate(180)" fill="#444"/><rect x="-1.15" y="-6.15" width="2.3" height="2.8" transform="rotate(225)" fill="#444"/><rect x="-1.15" y="-6.15" width="2.3" height="2.8" transform="rotate(270)" fill="#444"/><rect x="-1.15" y="-6.15" width="2.3" height="2.8" transform="rotate(315)" fill="#444"/></g><path d="M80 11.5 A4.1 4.1 0 1 1 76.2 7.4" fill="none" stroke="#444" stroke-width="2"/><path d="M76 4.6 L80.2 7.5 L76 10.4 Z" fill="#444"/><path d="M88.6 6.7 L97.3 15.4 M97.3 6.7 L88.6 15.4" stroke="#444" stroke-width="1.9"/></svg>
<svg style="left:340px;top:415px" width="220" height="220"><circle cx="108" cy="108" r="64" fill="none" stroke="#3eb1e4" stroke-width="61"/></svg>
<div class="t" style="left:500.50px;top:514.60px;font-size:14px;color:#1e1e1e;transform:scaleX(0.9553);transform-origin:0 0;">376</div>
<div style="position:absolute;left:650.5px;top:516.5px;width:12.5px;height:12.5px;background:#3eb1e4"></div>
<div class="t" style="left:671.30px;top:514.60px;font-size:14px;color:#1e1e1e;transform:scaleX(0.9133);transform-origin:0 0;">(No Value): 376 (100.00%)</div>
<svg style="left:0;top:0" width="1509" height="858"><rect x="950" y="591.93" width="366" height="1" fill="#c9c9c9"/><rect x="950" y="567.86" width="366" height="1" fill="#c9c9c9"/><rect x="950" y="543.79" width="366" height="1" fill="#c9c9c9"/><rect x="950" y="519.72" width="366" height="1" fill="#c9c9c9"/><rect x="950" y="495.65" width="366" height="1" fill="#c9c9c9"/><rect x="950" y="471.58" width="366" height="1" fill="#c9c9c9"/><rect x="950" y="447.51" width="366" height="1" fill="#c9c9c9"/><rect x="950" y="423.44" width="366" height="1" fill="#c9c9c9"/><rect x="959.80" y="410.10" width="27.9" height="205.90" fill="#3eb1e4"/><rect x="999.70" y="474.20" width="27.9" height="141.80" fill="#9b79e8"/><rect x="1039.60" y="523.00" width="27.9" height="93.00" fill="#8fce4c"/><rect x="1079.50" y="555.00" width="27.9" height="61.00" fill="#4a86e8"/><rect x="1119.40" y="555.00" width="27.9" height="61.00" fill="#fe5339"/><rect x="1159.30" y="586.80" width="27.9" height="29.20" fill="#fdc435"/><rect x="1199.20" y="595.00" width="27.9" height="21.00" fill="#e868b1"/><rect x="1239.10" y="601.30" width="27.9" height="14.70" fill="#c3c6ce"/><rect x="1279.00" y="613.10" width="27.9" height="2.90" fill="#e3394f"/><rect x="949" y="399" width="1" height="217.5" fill="#333"/><rect x="943" y="616.00" width="6" height="1" fill="#333"/><rect x="943" y="591.93" width="6" height="1" fill="#333"/><rect x="943" y="567.86" width="6" height="1" fill="#333"/><rect x="943" y="543.79" width="6" height="1" fill="#333"/><rect x="943" y="519.72" width="6" height="1" fill="#333"/><rect x="943" y="495.65" width="6" height="1" fill="#333"/><rect x="943" y="471.58" width="6" height="1" fill="#333"/><rect x="943" y="447.51" width="6" height="1" fill="#333"/><rect x="943" y="423.44" width="6" height="1" fill="#333"/><rect x="943" y="399.37" width="6" height="1" fill="#333"/><rect x="949" y="616" width="368" height="1" fill="#333"/><rect x="1316.2" y="616" width="1.4" height="8" fill="#666"/><rect x="332" y="708.30" width="409" height="1" fill="#c9c9c9"/><rect x="325" y="708.30" width="6" height="1" fill="#333"/><rect x="332" y="728.07" width="409" height="1" fill="#c9c9c9"/><rect x="325" y="728.07" width="6" height="1" fill="#333"/><rect x="332" y="747.84" width="409" height="1" fill="#c9c9c9"/><rect x="325" y="747.84" width="6" height="1" fill="#333"/><rect x="332" y="767.61" width="409" height="1" fill="#c9c9c9"/><rect x="325" y="767.61" width="6" height="1" fill="#333"/><rect x="332" y="787.38" width="409" height="1" fill="#c9c9c9"/><rect x="325" y="787.38" width="6" height="1" fill="#333"/><rect x="332" y="807.15" width="409" height="1" fill="#c9c9c9"/><rect x="325" y="807.15" width="6" height="1" fill="#333"/><rect x="332" y="826.92" width="409" height="1" fill="#c9c9c9"/><rect x="325" y="826.92" width="6" height="1" fill="#333"/><rect x="332" y="846.69" width="409" height="1" fill="#c9c9c9"/><rect x="325" y="846.69" width="6" height="1" fill="#333"/><rect x="342" y="827" width="391.2" height="40" fill="#3eb1e4"/><rect x="331" y="708.3" width="1" height="160" fill="#333"/></svg>
<div class="t" style="left:916.50px;top:392.17px;font-size:13px;color:#1e1e1e;transform:scaleX(1.0000);transform-origin:100% 0;">225</div>
<div class="t" style="left:916.50px;top:416.24px;font-size:13px;color:#1e1e1e;transform:scaleX(1.0000);transform-origin:100% 0;">200</div>
<div class="t" style="left:916.50px;top:440.31px;font-size:13px;color:#1e1e1e;transform:scaleX(1.0000);transform-origin:100% 0;">175</div>
<div class="t" style="left:916.50px;top:464.38px;font-size:13px;color:#1e1e1e;transform:scaleX(1.0000);transform-origin:100% 0;">150</div>
<div class="t" style="left:916.50px;top:488.45px;font-size:13px;color:#1e1e1e;transform:scaleX(1.0000);transform-origin:100% 0;">125</div>
<div class="t" style="left:916.50px;top:512.52px;font-size:13px;color:#1e1e1e;transform:scaleX(1.0000);transform-origin:100% 0;">100</div>
<div class="t" style="left:923.73px;top:536.59px;font-size:13px;color:#1e1e1e;transform:scaleX(1.0000);transform-origin:100% 0;">75</div>
<div class="t" style="left:923.73px;top:560.66px;font-size:13px;color:#1e1e1e;transform:scaleX(1.0000);transform-origin:100% 0;">50</div>
<div class="t" style="left:923.73px;top:584.73px;font-size:13px;color:#1e1e1e;transform:scaleX(1.0000);transform-origin:100% 0;">25</div>
<div class="t" style="left:930.97px;top:608.80px;font-size:13px;color:#1e1e1e;transform:scaleX(1.0000);transform-origin:100% 0;">0</div>
<div style="position:absolute;left:1337px;top:396px;width:12px;height:12px;background:#3eb1e4"></div>
<div class="t" style="left:1357.50px;top:394.00px;font-size:13px;color:#1e1e1e;transform:scaleX(0.9900);transform-origin:0 0;">Computer</div>
<div style="position:absolute;left:1337px;top:421px;width:12px;height:12px;background:#9b79e8"></div>
<div class="t" style="left:1357.50px;top:419.00px;font-size:13px;color:#1e1e1e;transform:scaleX(0.9900);transform-origin:0 0;">Running Software</div>
<div style="position:absolute;left:1337px;top:446px;width:12px;height:12px;background:#8fce4c"></div>
<div class="t" style="left:1357.50px;top:444.00px;font-size:13px;color:#1e1e1e;transform:scaleX(0.9900);transform-origin:0 0;">Office Electronics</div>
<div style="position:absolute;left:1337px;top:471px;width:12px;height:12px;background:#4a86e8"></div>
<div class="t" style="left:1357.50px;top:469.00px;font-size:13px;color:#1e1e1e;transform:scaleX(0.9900);transform-origin:0 0;">Telecommunications</div>
<div style="position:absolute;left:1337px;top:496px;width:12px;height:12px;background:#fe5339"></div>
<div class="t" style="left:1357.50px;top:494.00px;font-size:13px;color:#1e1e1e;transform:scaleX(0.9900);transform-origin:0 0;">Hand Held Devices</div>
<div style="position:absolute;left:1337px;top:521px;width:12px;height:12px;background:#fdc435"></div>
<div class="t" style="left:1357.50px;top:519.00px;font-size:13px;color:#1e1e1e;transform:scaleX(0.9900);transform-origin:0 0;">Business Service</div>
<div style="position:absolute;left:1337px;top:546px;width:12px;height:12px;background:#e868b1"></div>
<div class="t" style="left:1357.50px;top:544.00px;font-size:13px;color:#1e1e1e;transform:scaleX(0.9900);transform-origin:0 0;">Network Components</div>
<div style="position:absolute;left:1337px;top:571px;width:12px;height:12px;background:#c3c6ce"></div>
<div class="t" style="left:1357.50px;top:569.00px;font-size:13px;color:#1e1e1e;transform:scaleX(0.9900);transform-origin:0 0;">Application</div>
<div style="position:absolute;left:1337px;top:596px;width:12px;height:12px;background:#e3394f"></div>
<div class="t" style="left:1357.50px;top:594.00px;font-size:13px;color:#1e1e1e;transform:scaleX(0.9900);transform-origin:0 0;">CI Group</div>
<div class="t" style="left:903px;top:507px;font-size:12px;font-weight:bold;color:#222;transform:translate(-50%,-50%) rotate(-90deg) scaleX(0.93);">COUNT</div>
<div class="t" style="left:1118.31px;top:634.70px;font-size:13px;font-weight:bold;color:#222;transform:scaleX(0.9940);transform-origin:50% 0;">Type</div>
<div class="t" style="left:287.75px;top:702.20px;font-size:13px;color:#1e1e1e;transform:scaleX(0.9800);transform-origin:100% 0;">236.2</div>
<div class="t" style="left:298.60px;top:721.97px;font-size:13px;color:#1e1e1e;transform:scaleX(0.9800);transform-origin:100% 0;">236</div>
<div class="t" style="left:287.75px;top:741.74px;font-size:13px;color:#1e1e1e;transform:scaleX(0.9800);transform-origin:100% 0;">235.8</div>
<div class="t" style="left:287.75px;top:761.51px;font-size:13px;color:#1e1e1e;transform:scaleX(0.9800);transform-origin:100% 0;">235.6</div>
<div class="t" style="left:287.75px;top:781.28px;font-size:13px;color:#1e1e1e;transform:scaleX(0.9800);transform-origin:100% 0;">235.4</div>
<div class="t" style="left:287.75px;top:801.05px;font-size:13px;color:#1e1e1e;transform:scaleX(0.9800);transform-origin:100% 0;">235.2</div>
<div class="t" style="left:298.60px;top:820.82px;font-size:13px;color:#1e1e1e;transform:scaleX(0.9800);transform-origin:100% 0;">235</div>
<div class="t" style="left:287.75px;top:840.59px;font-size:13px;color:#1e1e1e;transform:scaleX(0.9800);transform-origin:100% 0;">234.8</div>
<div class="t" style="left:273.3px;top:817px;font-size:12px;font-weight:bold;color:#222;transform:translate(-50%,-50%) rotate(-90deg) scaleX(0.93);">COUNT</div>
<div style="position:absolute;left:762px;top:811.5px;width:12px;height:12px;background:#3eb1e4"></div>
<div class="t" style="left:782.50px;top:809.00px;font-size:14px;color:#1e1e1e;transform:scaleX(0.9754);transform-origin:0 0;">2017-03-03</div>
<div class="t" style="left:1109.01px;top:748.80px;font-size:101.4px;color:#0a80d0;transform:scaleX(0.9541);transform-origin:50% 0;">654</div>
<svg style="left:0;top:0" width="1509" height="858">
<g fill="#fe0000" stroke="#fe0000">
<line x1="1101.5" y1="339.8" x2="1305" y2="389.5" stroke-width="3.2" stroke-linecap="round"/>
<path d="M1300.4 383.8 L1325 395.4 L1297.8 394.6 Z" stroke-width="0.5"/>
<line x1="1102.6" y1="490.6" x2="1305" y2="540.8" stroke-width="3.2" stroke-linecap="round"/>
<path d="M1302 535 L1325.5 546.4 L1299.6 545.6 Z" stroke-width="0.5"/>
</g></svg>
<div style="position:absolute;left:300px;top:790px;width:1000px;height:140px;background:radial-gradient(ellipse 420px 70px at 560px 110px, rgba(0,0,0,0.075), rgba(0,0,0,0) 100%);pointer-events:none"></div>
</body></html>
